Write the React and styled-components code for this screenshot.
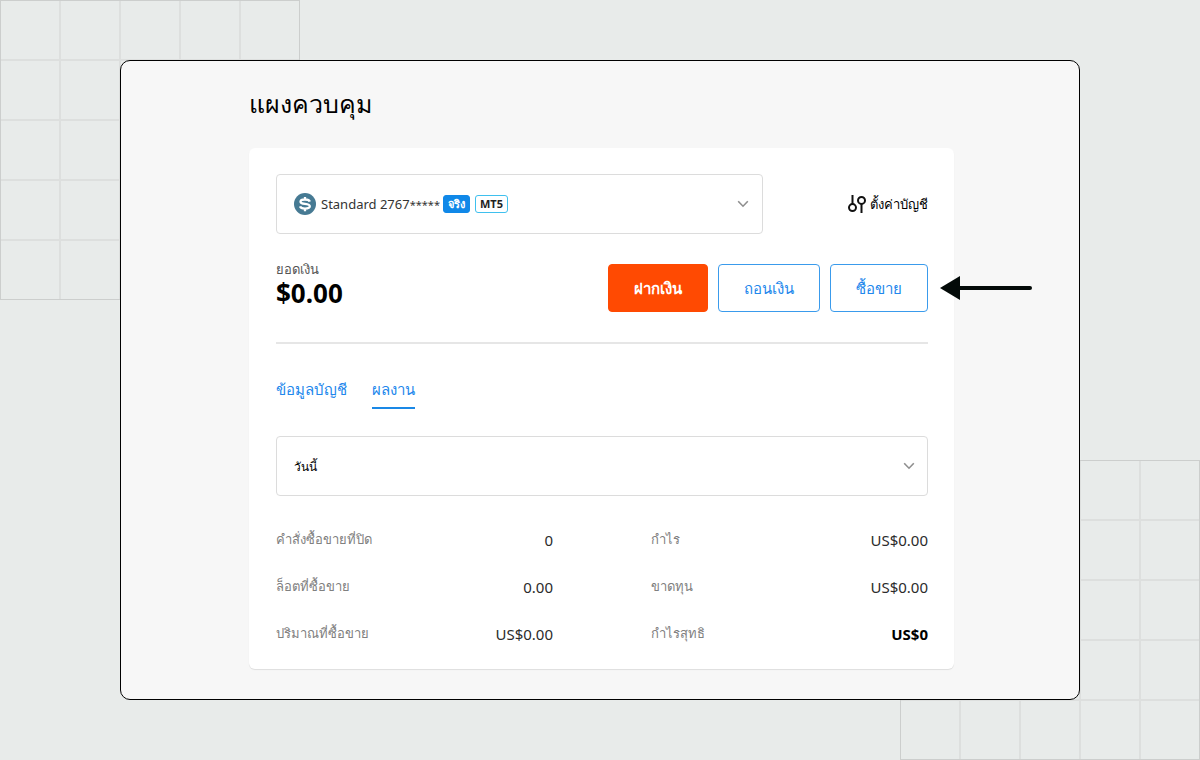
import React, { useState } from 'react';
import styled, { createGlobalStyle, css } from 'styled-components';

const gridSvg = () => {
  const lines = [60, 120, 180, 240].map((n) => `M${n} 0V300M0 ${n}H300`).join('');
  const svg = `<svg xmlns="http://www.w3.org/2000/svg" width="300" height="300"><path d="${lines}" stroke="#dddfde" stroke-width="2"/><rect x="0.5" y="0.5" width="299" height="299" fill="none" stroke="#cccecd"/></svg>`;
  return `url("data:image/svg+xml,${encodeURIComponent(svg)}")`;
};

const leftStats = [
  { label: 'คำสั่งซื้อขายที่ปิด', value: '0' },
  { label: 'ล็อตที่ซื้อขาย', value: '0.00' },
  { label: 'ปริมาณที่ซื้อขาย', value: 'US$0.00' },
];

const rightStats = [
  { label: 'กำไร', value: 'US$0.00' },
  { label: 'ขาดทุน', value: 'US$0.00' },
  { label: 'กำไรสุทธิ', value: 'US$0', total: true },
];

function Chevron() {
  return (
    <svg width="12" height="8" viewBox="0 0 12 8" fill="none" stroke="#8e8e8e" strokeWidth="1.6" aria-hidden="true">
      <path d="M1.2 1.2L6 6.2L10.8 1.2" />
    </svg>
  );
}

function DollarIcon() {
  return (
    <svg width="22" height="22" viewBox="0 0 22 22" fill="none" aria-hidden="true">
      <circle cx="11" cy="11" r="11" fill="#467a93" />
      <path
        d="M15.8 8.6C15.4 7.2 13.8 6.5 11 6.5C8.2 6.5 6.5 7.3 6.5 8.7C6.5 10.3 8.4 10.6 11 10.9C13.8 11.2 15.8 11.7 15.8 13.3C15.8 14.8 13.9 15.6 11 15.6C8.2 15.6 6.5 14.9 6 13.4M11 3.9V6.4M11 15.6V18.2"
        stroke="#fff"
        strokeWidth="2.3"
      />
    </svg>
  );
}

function SlidersIcon() {
  return (
    <svg width="18" height="18" viewBox="0 0 18 18" fill="none" stroke="#111" strokeWidth="2" aria-hidden="true">
      <path d="M4.5 0V9" />
      <circle cx="4.5" cy="12.6" r="3.5" />
      <path d="M13.5 9V18" />
      <circle cx="13.5" cy="5.4" r="3.5" />
    </svg>
  );
}

function StatList({ items }) {
  return (
    <Stats>
      {items.map((item) => (
        <Stat key={item.label}>
          <StatLabel>{item.label}</StatLabel>
          <StatValue $total={item.total}>{item.value}</StatValue>
        </Stat>
      ))}
    </Stats>
  );
}

function App() {
  const [tab, setTab] = useState('performance');
  const [period, setPeriod] = useState('today');

  return (
    <>
      <GlobalStyle />
      <Page>
        <Frame>
          <Title>แผงควบคุม</Title>
          <Card>
            <AccountRow>
              <AccountButton type='button' aria-haspopup='listbox'>
                <DollarIcon />
                <AccountName>
                  Standard 2767<Mask>*****</Mask>
                </AccountName>
                <Badge $filled>จริง</Badge>
                <Badge>MT5</Badge>
                <Chevron />
              </AccountButton>
              <SettingsButton type='button'>
                <SlidersIcon />
                ตั้งค่าบัญชี
              </SettingsButton>
            </AccountRow>

            <BalanceRow>
              <div>
                <BalanceLabel>ยอดเงิน</BalanceLabel>
                <BalanceAmount>$0.00</BalanceAmount>
              </div>
              <Actions>
                <ActionButton type='button' $primary>ฝากเงิน</ActionButton>
                <ActionButton type='button'>ถอนเงิน</ActionButton>
                <Highlighted>
                  <ActionButton type='button'>ซื้อขาย</ActionButton>
                  <Arrow width="92" height="24" viewBox="0 0 92 24" aria-hidden="true">
                    <path d="M0 12L20 0V24Z" fill="#030a08" />
                    <path d="M18 12H90" stroke="#030a08" strokeWidth="4" strokeLinecap="round" />
                  </Arrow>
                </Highlighted>
              </Actions>
            </BalanceRow>

            <Tabs role='tablist'>
              <Tab type='button' role='tab' aria-selected={tab === 'info'} $active={tab === 'info'} onClick={() => setTab('info')}>
                ข้อมูลบัญชี
              </Tab>
              <Tab type='button' role='tab' aria-selected={tab === 'performance'} $active={tab === 'performance'} onClick={() => setTab('performance')}>
                ผลงาน
              </Tab>
            </Tabs>

            <Period>
              <PeriodSelect aria-label='ผลงาน' value={period} onChange={(e) => setPeriod(e.target.value)}>
                <option value='today'>วันนี้</option>
              </PeriodSelect>
              <Chevron />
            </Period>

            <StatsGrid>
              <StatList items={leftStats} />
              <StatList items={rightStats} />
            </StatsGrid>
          </Card>
        </Frame>
      </Page>
    </>
  );
}

const GlobalStyle = createGlobalStyle`
  * {
    box-sizing: border-box;
  }

  body {
    margin: 0;
    color: #000;
    font-family: 'Noto Sans', 'Open Sans', sans-serif;
  }

  button, select {
    font-family: inherit;
    cursor: pointer;
  }
`;

const Page = styled.div`
  min-height: 100vh;
  display: flex;
  flex-direction: column;
  padding: 60px 10%;
  background: ${gridSvg()} left top no-repeat, ${gridSvg()} right bottom no-repeat, #e8ebea;
`;

const Frame = styled.main`
  flex: 1;
  padding: 22px 125px 29px 128px;
  border: 1px solid #000;
  border-radius: 10px;
  background: #f7f7f7;
`;

const Title = styled.h1`
  margin: 0 0 25px;
  font-size: 25px;
  line-height: 40px;
  font-weight: 400;
`;

const Card = styled.section`
  padding: 26px 26px 12px 27px;
  border-radius: 6px;
  background: #fff;
  box-shadow: 0 1px 1px rgba(0, 0, 0, 0.1);
`;

const AccountRow = styled.div`
  display: flex;
  align-items: center;
  justify-content: space-between;
`;

const AccountButton = styled.button`
  flex: 0 1 487px;
  height: 60px;
  display: flex;
  align-items: center;
  padding: 0 13px 0 17px;
  border: 1px solid #dcdcdc;
  border-radius: 4px;
  background: #fff;

  > svg:last-child {
    margin-left: auto;
  }
`;

const AccountName = styled.span`
  margin: 0 3px 0 5px;
  font-size: 13px;
  line-height: 20px;
  color: #333;
`;

const Mask = styled.span`
  font-size: 11px;
`;

const Badge = styled.span`
  height: 18px;
  margin-right: 5px;
  padding: 0 4px;
  border: 1px solid ${({ $filled }) => ($filled ? '#1088e8' : '#3fc0ee')};
  border-radius: 3px;
  background: ${({ $filled }) => ($filled ? '#1088e8' : '#fff')};
  color: ${({ $filled }) => ($filled ? '#fff' : '#222')};
  font-size: 11px;
  line-height: 16px;
  font-weight: 700;
`;

const SettingsButton = styled.button`
  display: flex;
  align-items: center;
  gap: 4px;
  padding: 0;
  border: none;
  background: none;
  color: #000;
  font-size: 13px;
  line-height: 20px;
`;

const BalanceRow = styled.div`
  display: flex;
  align-items: flex-end;
  justify-content: space-between;
  margin-top: 26px;
  padding-bottom: 30px;
  border-bottom: 2px solid #e6e6e6;
`;

const BalanceLabel = styled.div`
  font-size: 13px;
  line-height: 18px;
  color: #555;
`;

const BalanceAmount = styled.div`
  font-size: 26px;
  line-height: 30px;
  margin-bottom: 4px;
  font-weight: 700;
`;

const Actions = styled.div`
  display: flex;
  gap: 10px;
`;

const ActionButton = styled.button`
  height: 48px;
  padding: 0 25px;
  border: 1px solid #3a9bec;
  border-radius: 4px;
  background: #fff;
  color: #2287ec;
  font-size: 15px;
  line-height: 20px;

  ${({ $primary }) =>
    $primary &&
    css`
      border-color: #ff4a02;
      background: #ff4a02;
      color: #fff;
      font-weight: 700;
    `}
`;

const Highlighted = styled.div`
  position: relative;
`;

const Arrow = styled.svg`
  position: absolute;
  left: 100%;
  top: 12px;
  margin-left: 12px;
`;

const Tabs = styled.div`
  display: flex;
  gap: 25px;
  margin-top: 33px;
`;

const Tab = styled.button`
  height: 32px;
  padding: 0 0 6px;
  border: none;
  border-bottom: 2px solid ${({ $active }) => ($active ? '#1a88e6' : 'transparent')};
  background: none;
  color: #2287ec;
  font-size: 15px;
  line-height: 24px;
`;

const Period = styled.div`
  display: grid;
  align-items: center;
  margin-top: 27px;

  > * {
    grid-area: 1 / 1;
  }

  > svg {
    justify-self: end;
    margin-right: 13px;
    pointer-events: none;
  }
`;

const PeriodSelect = styled.select`
  width: 100%;
  height: 60px;
  padding: 0 17px;
  border: 1px solid #dcdcdc;
  border-radius: 4px;
  appearance: none;
  background: #fff;
  color: #000;
  font-size: 12px;
`;

const StatsGrid = styled.div`
  display: grid;
  grid-template-columns: 1fr 1fr;
  gap: 98px;
  margin-top: 20px;
`;

const Stats = styled.dl`
  margin: 0;
`;

const Stat = styled.div`
  height: 47px;
  display: flex;
  align-items: center;
  justify-content: space-between;
`;

const StatLabel = styled.dt`
  font-size: 13px;
  color: #808080;
`;

const StatValue = styled.dd`
  margin: 0;
  font-size: 15px;
  line-height: 20px;
  color: ${({ $total }) => ($total ? '#000' : '#2b2b2b')};
  font-weight: ${({ $total }) => ($total ? 700 : 400)};
`;

export default App;
